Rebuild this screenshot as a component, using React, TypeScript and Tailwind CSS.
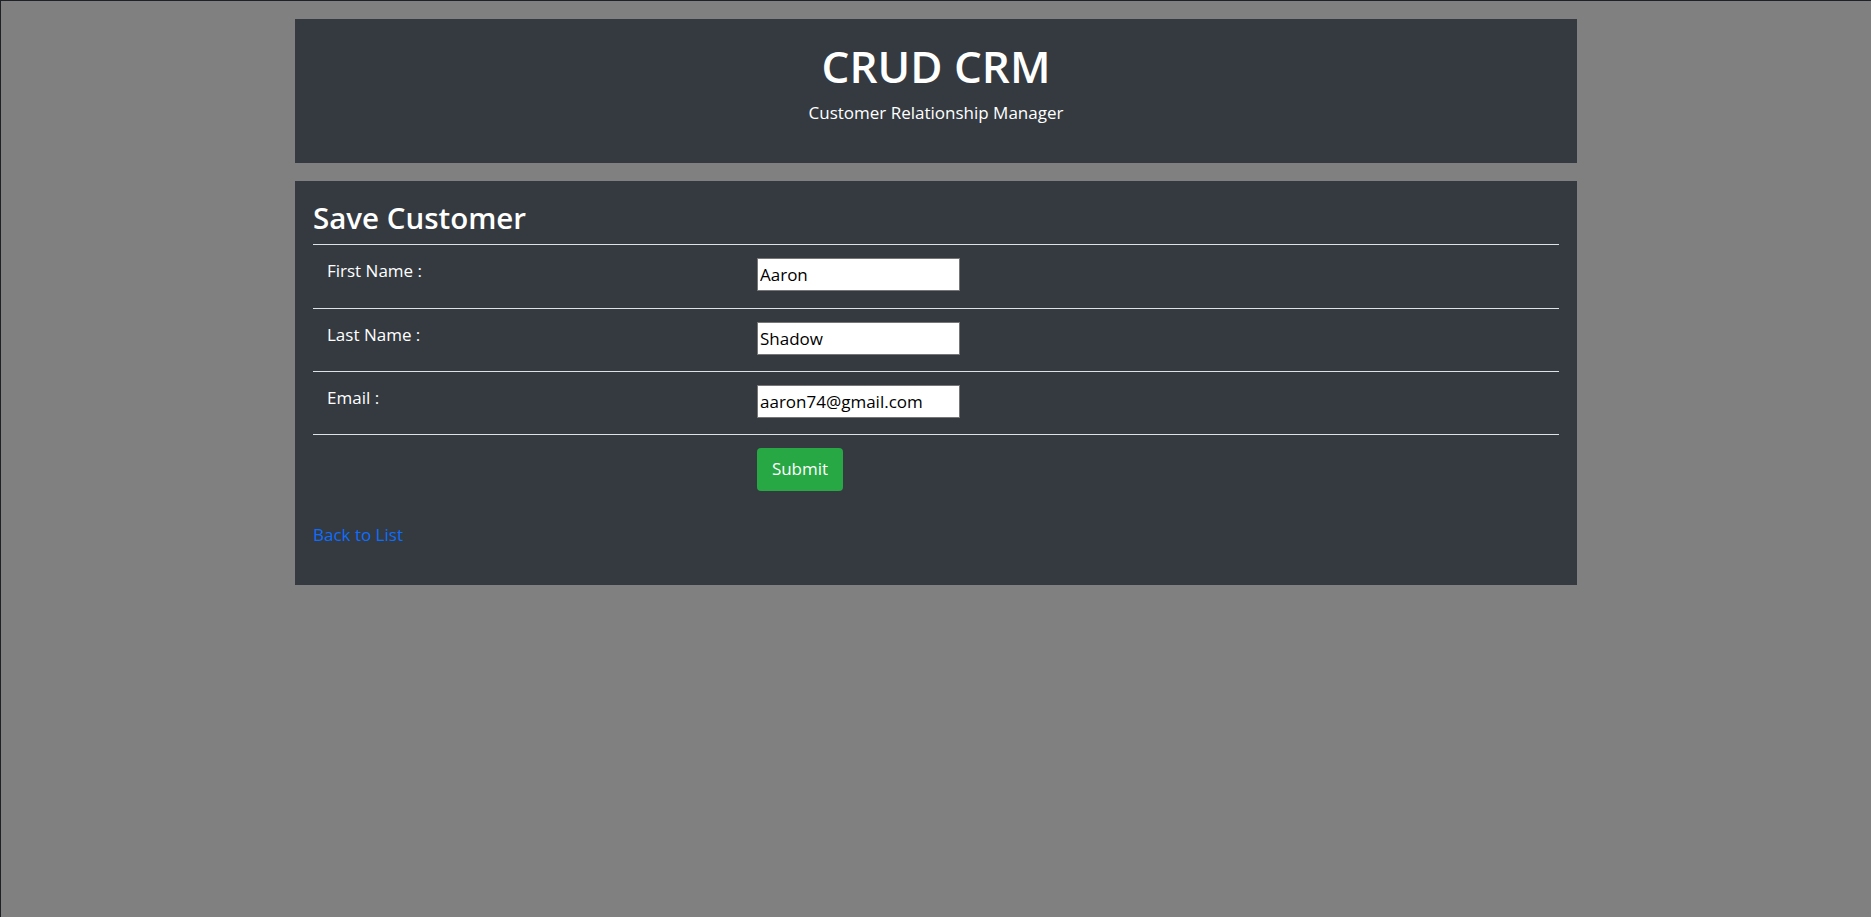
import React from 'react';

const fields = [
  { label: 'First Name :', value: 'Aaron' },
  { label: 'Last Name :', value: 'Shadow' },
  { label: 'Email :', value: 'aaron74@gmail.com' },
];

const App: React.FC = () => {
  return (
    <div className="min-h-screen bg-[#808080] border-t border-l border-[#1e2227] font-['Open_Sans',sans-serif]">
      <div className="w-[1282px] mx-auto pt-[18px]">
        <div className="bg-[#343a40] h-[144px] text-white text-center pt-[21px]">
          <h1 className="text-[44px] leading-[52px] font-semibold">CRUD CRM</h1>
          <p className="mt-[9px] text-[17px] leading-[24px]">Customer Relationship Manager</p>
        </div>

        <div className="mt-[18px] bg-[#343a40] h-[404px] px-[18px] pt-[16px] text-white">
          <h2 className="text-[29.5px] leading-[42px] font-semibold pb-[5px] border-b border-[#dee2e6]">
            Save Customer
          </h2>
          <table className="w-full border-collapse">
            <tbody>
              {fields.map((f) => (
                <tr key={f.label} className="border-b border-[#dee2e6] h-[63px]">
                  <td className="w-[444px] pl-[14px] align-top pt-[14px] text-[17px] leading-[24px]">
                    {f.label}
                  </td>
                  <td className="align-top pt-[13px]">
                    <input
                      type="text"
                      defaultValue={f.value}
                      className="w-[203px] h-[33px] bg-white text-black border border-[#767676] px-[2px] text-[17px] outline-none"
                    />
                  </td>
                </tr>
              ))}
              <tr>
                <td className="w-[444px]"></td>
                <td className="pt-[13px]">
                  <button className="bg-[#28a745] text-white rounded-[4px] w-[86px] h-[43px] text-[17px]">
                    Submit
                  </button>
                </td>
              </tr>
            </tbody>
          </table>
          <a href="#" className="inline-block mt-[32px] text-[#0d6efd] text-[17px] leading-[24px]">
            Back to List
          </a>
        </div>
      </div>
    </div>
  );
};

export default App;
